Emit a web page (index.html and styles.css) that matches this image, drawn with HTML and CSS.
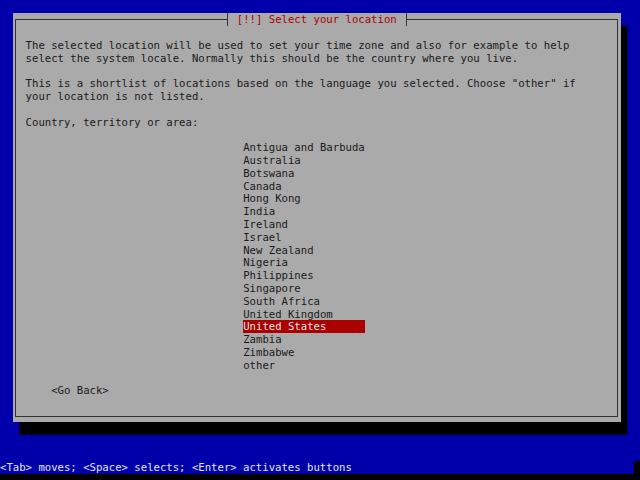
FILE: index.html
```html
<!DOCTYPE html>
<html lang="en">
  <head>
    <meta charset="UTF-8" />
    <meta name="viewport" content="width=device-width, initial-scale=1.0" />
    <title>Select your location</title>
    <link rel="stylesheet" href="styles.css">
  </head>
  <body>
    <div class="screen">
      <div class="dialog">
        <div class="title">[!!] Select your location</div>
        <p>The selected location will be used to set your time zone and also for example to help<br>select the system locale. Normally this should be the country where you live.</p>
        <p>This is a shortlist of locations based on the language you selected. Choose "other" if<br>your location is not listed.</p>
        <p>Country, territory or area:</p>
        <ul class="countries">
          <li>Antigua and Barbuda</li>
          <li>Australia</li>
          <li>Botswana</li>
          <li>Canada</li>
          <li>Hong Kong</li>
          <li>India</li>
          <li>Ireland</li>
          <li>Israel</li>
          <li>New Zealand</li>
          <li>Nigeria</li>
          <li>Philippines</li>
          <li>Singapore</li>
          <li>South Africa</li>
          <li>United Kingdom</li>
          <li class="selected">United States</li>
          <li>Zambia</li>
          <li>Zimbabwe</li>
          <li>other</li>
        </ul>
        <div class="go-back">&lt;Go Back&gt;</div>
      </div>
    </div>
    <div class="status">&lt;Tab&gt; moves; &lt;Space&gt; selects; &lt;Enter&gt; activates buttons</div>
  </body>
</html>
```

FILE: styles.css
```css
body {
  margin: 0;
  width: 640px;
  height: 480px;
  overflow: hidden;
  background: #000;
  font-family: "DejaVu Sans Mono", monospace;
  font-size: 10.63px;
  line-height: 12.8px;
  color: #1a1a1a;
}

.screen {
  height: 460.8px;
  box-sizing: border-box;
  padding: 12.8px 0 0 12.8px;
  background: #0000aa;
}

.dialog {
  position: relative;
  width: 608px;
  height: 409.6px;
  box-sizing: border-box;
  padding: 27.1px 12.8px 0;
  background: #aaaaaa;
  box-shadow: 6.4px 12.8px 0 #000;
}
.dialog::before {
  content: "";
  position: absolute;
  inset: 5.9px 2.7px;
  border: 1px solid #333;
  pointer-events: none;
}

.title {
  position: absolute;
  top: 0;
  left: 213.9px;
  height: 12.8px;
  box-sizing: border-box;
  padding: 1.5px 9.1px 0;
  border-left: 1px solid #333;
  border-right: 1px solid #333;
  background: #aaaaaa;
  color: #aa0000;
  z-index: 1;
}

.dialog p {
  margin: 0 0 12.8px;
}

.countries {
  list-style: none;
  margin: -1.5px 0 14.3px 217.6px;
  padding: 0;
  width: 121.6px;
}
.countries li {
  height: 12.8px;
  box-sizing: border-box;
  padding-top: 1.5px;
  white-space: nowrap;
}
.countries .selected {
  background: #aa0000;
  color: #e4e4e4;
}

.go-back {
  margin-left: 25.6px;
}

.status {
  width: 633.6px;
  height: 12.8px;
  box-sizing: border-box;
  padding-top: 1.5px;
  background: #0000aa;
  color: #e6e6e6;
  white-space: nowrap;
}
```
